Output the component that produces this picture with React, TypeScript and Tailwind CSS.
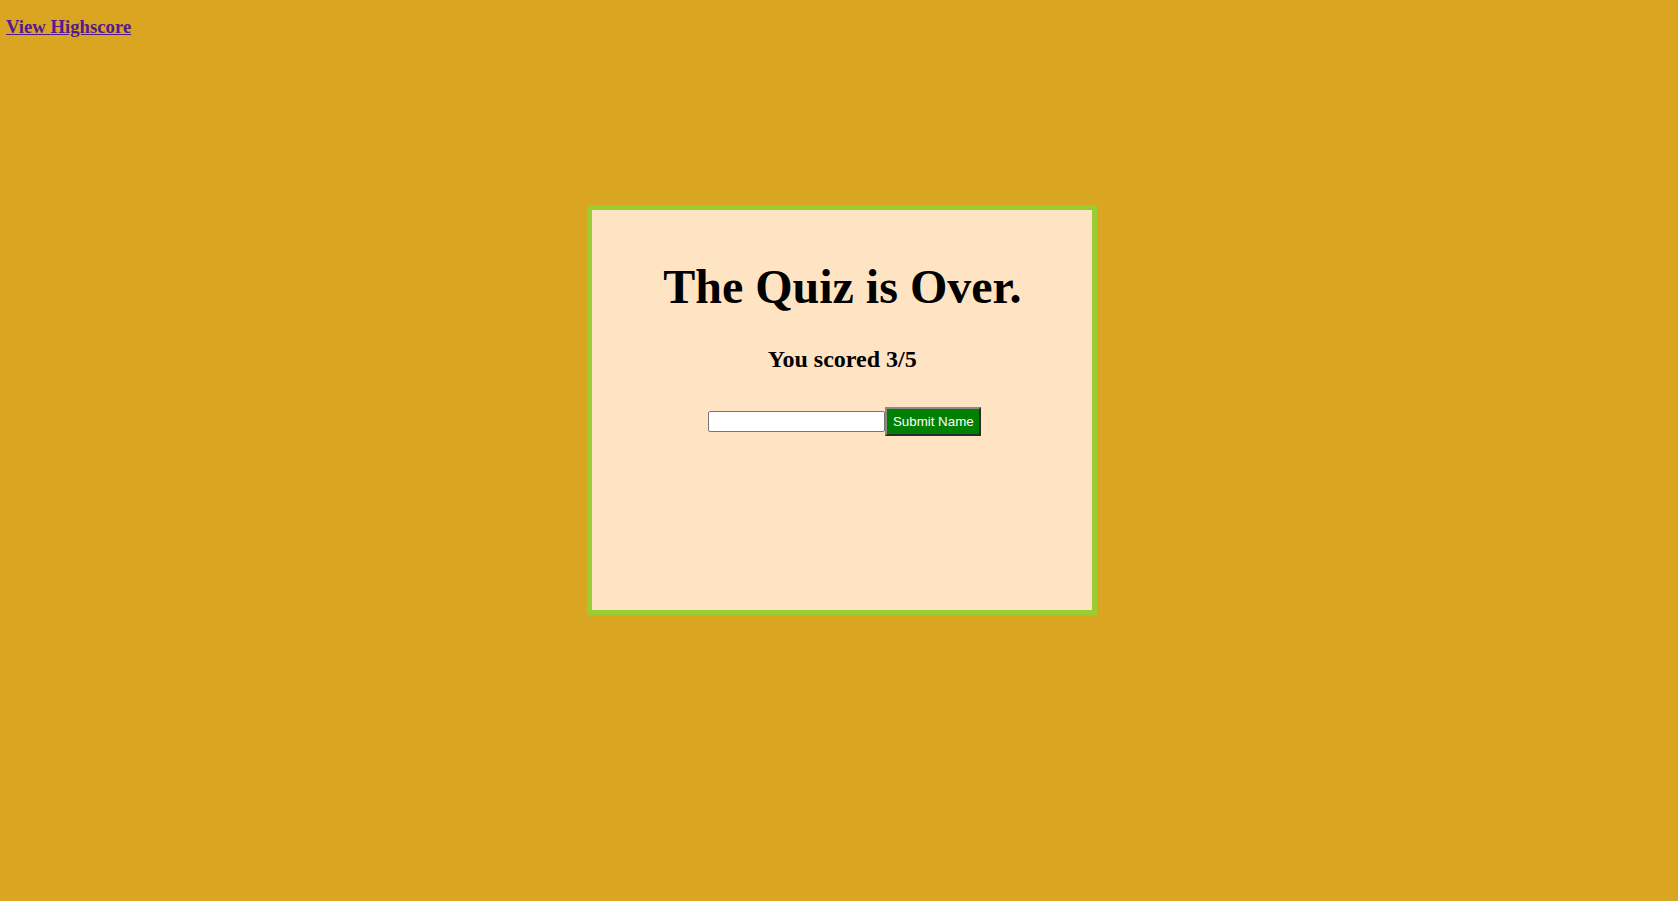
import React from "react";

const App = () => {
  return (
    <div className="min-h-screen w-full bg-[#DAA520] font-['Liberation_Serif',serif] text-black">
      {/* header link */}
      <div className="pt-[16px] pl-[6px]">
        <a href="#" className="text-[18.72px] leading-[22px] font-bold text-[#551A8B] underline">
          View Highscore
        </a>
      </div>

      {/* result card */}
      <div className="ml-[35%] mt-[165px] w-[510px] h-[410px] border-[5px] border-[#9ACD32] bg-[#FFE4C4] text-center">
        <h1 className="mt-[49px] text-[48px] leading-[55px] font-bold">The Quiz is Over.</h1>
        <h2 className="mt-[31px] text-[24px] leading-[28px] font-bold">You scored 3/5</h2>

        <form className="mt-[34px] flex items-center justify-center pl-[5px]" onSubmit={(e) => e.preventDefault()}>
          <input
            type="text"
            className="w-[177px] h-[21px] px-[2px] bg-white border border-[#767676] rounded-[2px] text-[13.33px] font-['Liberation_Sans',sans-serif] outline-none"
          />
          <button
            type="submit"
            className="w-[96px] h-[29px] bg-[#008000] text-white text-[13.33px] font-['Liberation_Sans',sans-serif] border-2 border-t-[#8a8a8a] border-l-[#8a8a8a] border-r-[#2b2b2b] border-b-[#2b2b2b]"
          >
            Submit Name
          </button>
        </form>
      </div>
    </div>
  );
};

export default App;
